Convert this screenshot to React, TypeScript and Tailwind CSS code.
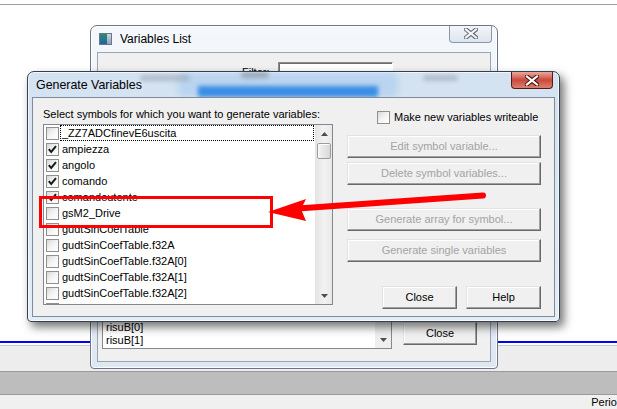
import React from "react";

const font = "font-['Liberation_Sans',Arial,sans-serif]";

const Check = ({ checked }: { checked?: boolean }) => (
  <span className="relative block h-[13px] w-[13px] shrink-0 border border-[#8e8f8f] bg-linear-to-br from-[#d8d8d8] via-[#f4f4f4] to-white">
    {checked && (
      <svg width="11" height="11" viewBox="0 0 11 11" className="absolute left-0 top-0">
        <path d="M1.8 5.2 L4.2 7.9 L9 2.2" fill="none" stroke="#1a1a1a" strokeWidth="2" />
      </svg>
    )}
  </span>
);

const Btn = ({
  children,
  disabled,
  className = "",
}: {
  children: React.ReactNode;
  disabled?: boolean;
  className?: string;
}) => (
  <div
    className={`flex h-[23px] items-center justify-center border border-t-[#e3e3e3] border-l-[#e3e3e3] border-r-[#696969] border-b-[#696969] bg-[#f0f0f0] shadow-[inset_-1px_-1px_0_#a0a0a0,inset_1px_1px_0_#ffffff] text-[11px] ${
      disabled ? "text-[#a3a3a3]" : "text-black"
    } ${className}`}
  >
    {children}
  </div>
);

const rows: [string, boolean][] = [
  ["_ZZ7ADCfinevE6uscita", false],
  ["ampiezza", true],
  ["angolo", true],
  ["comando", true],
  ["comandoutente", true],
  ["gsM2_Drive", false],
  ["gudtSinCoefTable", false],
  ["gudtSinCoefTable.f32A", false],
  ["gudtSinCoefTable.f32A[0]", false],
  ["gudtSinCoefTable.f32A[1]", false],
  ["gudtSinCoefTable.f32A[2]", false],
  ["gudtSinCoefTable.f32A[3]", false],
];

const UpArrow = () => (
  <svg width="7" height="4" viewBox="0 0 7 4">
    <path d="M0 4 L3.5 0 L7 4 Z" fill="#4d4d4d" />
  </svg>
);
const DownArrow = () => (
  <svg width="7" height="4" viewBox="0 0 7 4">
    <path d="M0 0 L3.5 4 L7 0 Z" fill="#4d4d4d" />
  </svg>
);

const CloseX = ({ active }: { active?: boolean }) => (
  <svg width="14" height="11" viewBox="0 0 14 11">
    <path
      d="M2 1.5 L12 9.5 M12 1.5 L2 9.5"
      stroke={active ? "#47120c" : "#5d6670"}
      strokeWidth="4.2"
      strokeLinecap="square"
    />
    <path
      d="M2 1.5 L12 9.5 M12 1.5 L2 9.5"
      stroke={active ? "#ffffff" : "#f4f6f8"}
      strokeWidth="2.2"
      strokeLinecap="square"
    />
  </svg>
);

export default function App() {
  return (
    <div className={`relative h-[409px] w-[617px] overflow-hidden bg-white ${font}`}>
      {/* background application */}
      <div className="flex h-full flex-col">
        <div className="h-[4px]" />
        <div className="h-px bg-[#a0a0a0]" />
        <div className="h-[340px] bg-white" />
        <div className="h-[2px] bg-[#0000ff]" />
        <div className="h-[2px] bg-white" />
        <div className="h-px bg-[#c8c8c8]" />
        <div className="h-[26px] bg-[#ededed]" />
        <div className="h-px bg-[#9a9a9a]" />
        <div className="h-[22px] bg-[#bdbdbd]" />
        <div className="h-px bg-[#9a9a9a]" />
        <div className="flex flex-1 justify-end bg-[#f0f0f0]">
          <span className="mr-[-6px] pt-[1px] text-[11px] leading-[13px] text-black">Period</span>
        </div>
      </div>

      {/* Variables List window (inactive) */}
      <div className="absolute left-[90px] top-[25px] flex h-[344px] w-[408px] flex-col overflow-hidden rounded-t-[7px] rounded-b-[4px] border border-[#6d7684] bg-linear-to-b from-[#f4f8fc] via-[#e9f0f7] to-[#dfe8f2] shadow-[inset_0_0_0_1px_rgba(255,255,255,0.8)]">
        <div className="relative flex h-[26px] shrink-0 items-center pl-[8px]">
          <div className="flex h-[12px] w-[13px] border border-[#6a7686] bg-white">
            <div className="w-[7px] bg-linear-to-b from-[#2f8a6c] to-[#2b5ea8]" />
            <div className="flex-1 bg-linear-to-b from-[#c9d6e4] to-[#8ea4bd]" />
          </div>
          <span className="ml-[8px] text-[12px] leading-[14px] text-black">Variables List</span>
          <div className="absolute right-[5px] top-[-1px] flex h-[18px] w-[43px] items-center justify-center rounded-b-[4px] border border-t-0 border-[#8d98a6] bg-linear-to-b from-[#f4f7fa] to-[#dde5ee]">
            <CloseX />
          </div>
        </div>
        <div className="mx-[6px] flex h-[310px] flex-col justify-between border border-[#9aa5b2] bg-[#f0f0f0]">
          <div className="mt-[9px] flex items-center pl-[144px]">
            <span className="text-[11px] leading-[13px] text-black">Filter:</span>
            <div className="ml-[8px] h-[21px] w-[115px] border border-[#8a8a8a] border-b-white border-r-white bg-white shadow-[inset_1px_1px_0_#6e6e6e]" />
          </div>
          <div className="mb-[12px] flex items-end pl-[4px]">
            <div className="flex h-[200px] w-[290px] border border-[#828790] bg-white">
              <div className="flex flex-1 flex-col justify-end pb-[1px] pl-[3px] text-[11px] leading-[13px] text-black">
                <span>risuB[0]</span>
                <span>risuB[1]</span>
              </div>
              <div className="flex w-[16px] flex-col justify-end bg-[#eeeeee]">
                <div className="flex h-[16px] items-center justify-center">
                  <DownArrow />
                </div>
              </div>
            </div>
            <Btn className="mb-[4px] ml-[11px] w-[74px]">Close</Btn>
          </div>
        </div>
      </div>

      {/* Generate Variables window (active) */}
      <div className="absolute left-[27px] top-[71px] flex h-[251px] w-[533px] flex-col overflow-hidden rounded-t-[7px] rounded-b-[4px] border border-[#34404e] bg-linear-to-b from-[#d3e2f1] via-[#dbe7f3] to-[#e4edf6] shadow-[inset_0_0_0_1px_rgba(255,255,255,0.7),4px_5px_10px_rgba(0,0,0,0.55)]">
        {/* glass colouring */}
        <div className="absolute left-[150px] top-[1px] h-[24px] w-[220px] rounded-[6px] bg-[#b9d4ef] blur-[3px]" />
        <div className="absolute left-[170px] top-[14px] h-[11px] w-[180px] bg-[#3a8de4] blur-[2px]" />
        <div className="absolute left-[112px] top-[3px] h-[6px] w-[50px] rounded bg-[#9aa6b4] opacity-60 blur-[2px]" />
        <div className="absolute left-[213px] top-[0px] h-[6px] w-[28px] rounded bg-[#8b95a3] opacity-70 blur-[2px]" />
        <div className="absolute left-[395px] top-[3px] h-[6px] w-[35px] rounded bg-[#9aa6b4] opacity-60 blur-[2px]" />
        <div className="relative flex h-[25px] shrink-0 items-center pl-[8px]">
          <span className="text-[12.4px] leading-[14px] text-black">Generate Variables</span>
          <div className="absolute right-[6px] top-[0px] flex h-[17px] w-[42px] items-center justify-center rounded-b-[4px] border border-t-0 border-[#5a1a14] bg-linear-to-b from-[#e9a99b] via-[#c9483c] to-[#d9806f]">
            <CloseX active />
          </div>
        </div>

        <div className="relative mx-[4px] flex h-[220px] border border-[#7d8b9a] bg-[#f0f0f0] text-[11px] text-black">
          {/* left column */}
          <div className="flex flex-col pl-[10px] pt-[9px]">
            <span className="h-[14px] leading-[14px]">Select symbols for which you want to generate variables:</span>
            <div className="mt-[3px] flex h-[181px] w-[290px] border border-[#828790] bg-white">
              <div className="flex flex-1 flex-col overflow-hidden">
                {rows.map(([name, checked], i) => (
                  <div key={name} className="flex h-[16px] shrink-0 items-center pl-[2px]">
                    <Check checked={checked} />
                    <span
                      className={`ml-[1px] mr-[1px] flex h-[16px] flex-1 items-center border pl-[1px] leading-[13px] ${
                        i === 0 ? "border-dotted border-black" : "border-transparent"
                      }`}
                    >
                      {name}
                    </span>
                  </div>
                ))}
              </div>
              {/* scrollbar */}
              <div className="flex w-[17px] flex-col border-l border-[#e4e4e4] bg-linear-to-r from-[#e6e6e6] via-[#f2f2f2] to-[#e9e9e9]">
                <div className="flex h-[17px] items-center justify-center">
                  <UpArrow />
                </div>
                <div className="mx-[1px] mt-[1px] h-[16px] rounded-[2px] border border-[#9c9c9c] bg-linear-to-r from-[#f4f4f4] via-[#e6e6e6] to-[#d8d8d8] shadow-[inset_1px_1px_0_#ffffff]" />
                <div className="flex-1" />
                <div className="flex h-[17px] items-center justify-center">
                  <DownArrow />
                </div>
              </div>
            </div>
          </div>

          {/* right column */}
          <div className="ml-[14px] flex w-[194px] flex-col pt-[12px]">
            <div className="flex h-[14px] items-center pl-[30px]">
              <Check />
              <span className="ml-[4px] leading-[13px]">Make new variables writeable</span>
            </div>
            <Btn disabled className="mt-[11px]">Edit symbol variable...</Btn>
            <Btn disabled className="mt-[4px]">Delete symbol variables...</Btn>
            <Btn disabled className="mt-[23px]">Generate array for symbol...</Btn>
            <Btn disabled className="mt-[8px]">Generate single variables</Btn>
            <div className="mt-[24px] flex justify-end gap-[9px]">
              <Btn className="w-[75px]">Close</Btn>
              <Btn className="w-[75px]">Help</Btn>
            </div>
          </div>
        </div>
        <div className="flex-1" />
      </div>

      {/* red annotation */}
      <div className="absolute left-[39px] top-[196px] h-[32px] w-[234px] border-[3px] border-[#ff0000]" />
      <svg className="pointer-events-none absolute left-0 top-0" width="617" height="409" viewBox="0 0 617 409">
        <line x1="298" y1="208.5" x2="483" y2="195.5" stroke="#ff0000" strokeWidth="6" strokeLinecap="round" />
        <polygon points="268,212 306,199 301,209 306,221" fill="#ff0000" />
      </svg>
    </div>
  );
}
